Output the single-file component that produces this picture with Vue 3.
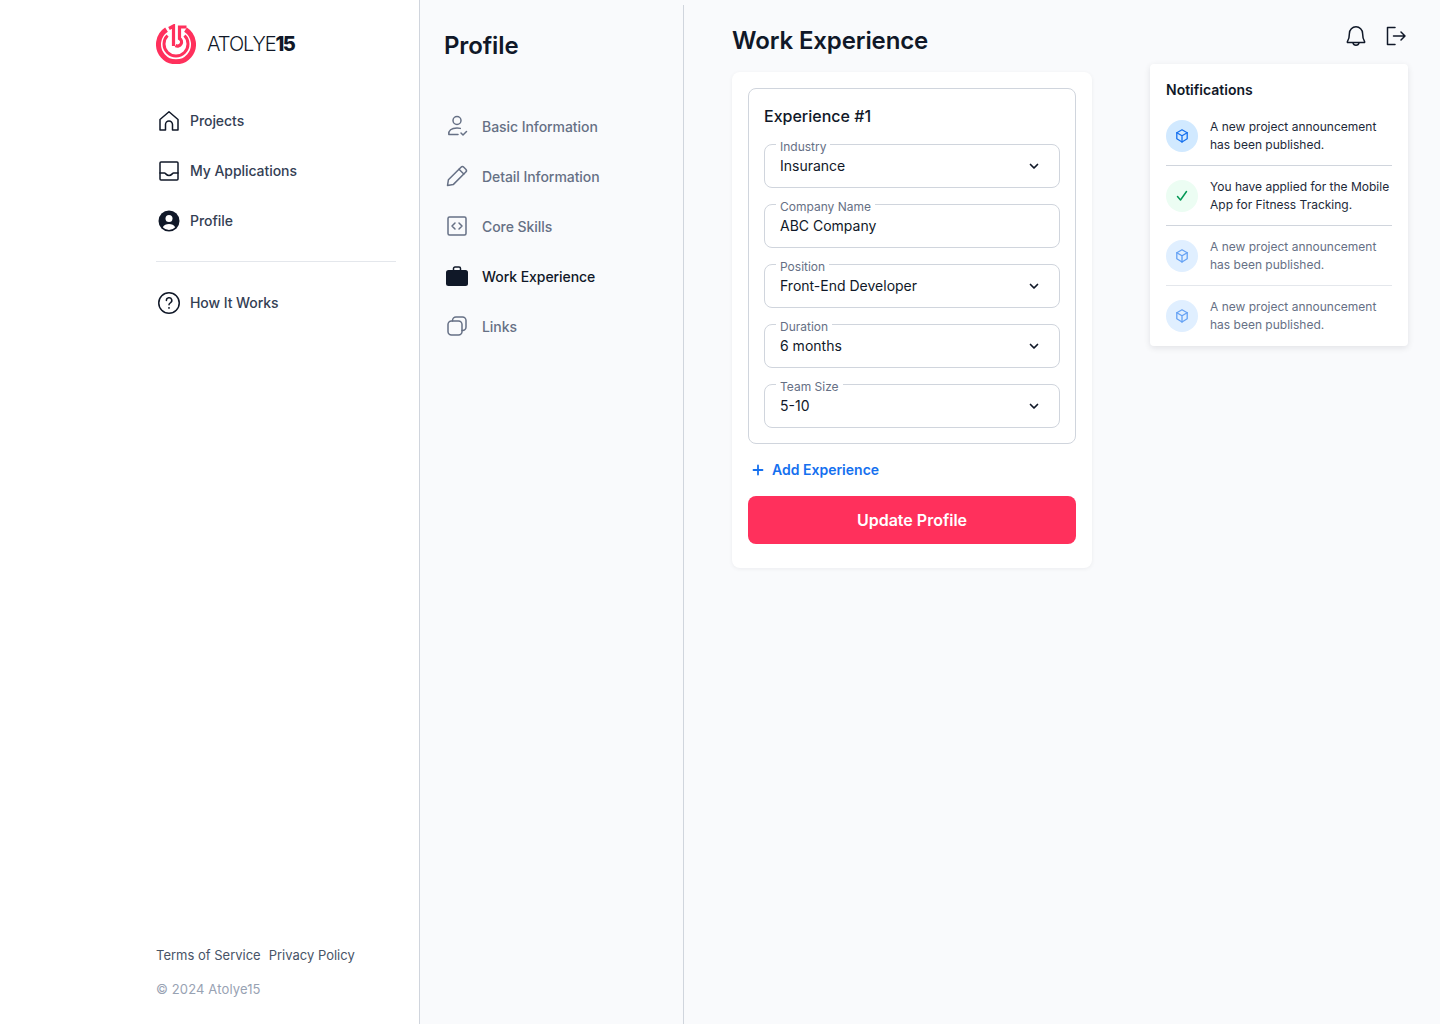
<template>
<div class="page">
    <aside class="sidebar">
        <div class="logo">
            <svg width="40" height="40" viewBox="0 0 40 40" fill="none" stroke="#ff305c">
                <path d="M10.500 5.600a17.500 17.500 0 1 0 19 0" stroke-width="5" />
                <path d="M11.500 11.500a12 12 0 1 0 17 0" stroke-width="3" />
                <path d="M13 4.500 17.500 2v20" stroke-width="3.200" />
                <path d="M30.500 3H23.500v11.500a3.500 3.500 0 0 1-4 7" stroke-width="3.200" />
            </svg>
            <span class="logo-text">ATOLYE<b>15</b></span>
        </div>

        <nav class="side-nav">
            <a class="side-link" v-for="link in sideLinks" :key="link.label">
                <svg width="24" height="24" viewBox="0 0 24 24" fill="none" stroke="#101828" stroke-width="1.500" stroke-linejoin="round" stroke-linecap="round" v-html="link.icon"></svg>
                <span>{{ link.label }}</span>
            </a>
        </nav>

        <div class="side-divider"></div>

        <a class="side-link">
            <svg width="24" height="24" viewBox="0 0 24 24" fill="none" stroke="#101828" stroke-width="1.500" stroke-linecap="round">
                <circle cx="12" cy="12" r="10.250" />
                <path d="M9.400 9.400a2.700 2.700 0 1 1 4 2.400c-.9.500-1.400 1-1.400 2" />
                <path d="M12 16.800v.1" stroke-width="1.800" />
            </svg>
            <span>How It Works</span>
        </a>

        <footer class="side-footer">
            <div class="terms">
                <a>Terms of Service</a>
                <a>Privacy Policy</a>
            </div>
            <p class="copy">© 2024 Atolye15</p>
        </footer>
    </aside>

    <section class="profile-col">
        <h2 class="profile-title">Profile</h2>
        <nav class="profile-nav">
            <a
                v-for="item in profileLinks"
                :key="item.label"
                class="profile-link"
                :class="{ active: item.active }"
            >
                <svg width="24" height="24" viewBox="0 0 24 24" fill="none" stroke="#667085" stroke-width="1.500" stroke-linejoin="round" stroke-linecap="round" v-html="item.icon"></svg>
                <span>{{ item.label }}</span>
            </a>
        </nav>
    </section>

    <main class="main">
        <h1 class="main-title">Work Experience</h1>

        <div class="card">
            <div class="experience">
                <h3 class="experience-title">Experience #1</h3>
                <div class="fields">
                    <div class="field" v-for="field in fields" :key="field.label">
                        <label class="field-label">{{ field.label }}</label>
                        <span class="field-value">{{ field.value }}</span>
                        <svg v-if="field.select" width="20" height="20" viewBox="0 0 20 20" fill="none" stroke="#101828" stroke-width="1.700" stroke-linecap="round" stroke-linejoin="round">
                            <path d="m6.500 8.500 3.500 3.500 3.500-3.500" />
                        </svg>
                    </div>
                </div>
            </div>

            <a class="add-link">
                <svg width="12" height="12" viewBox="0 0 12 12" fill="none" stroke="#1570ef" stroke-width="1.800" stroke-linecap="round">
                    <path d="M6 1.500v9M1.500 6h9" />
                </svg>
                <span>Add Experience</span>
            </a>

            <button class="update-btn">Update Profile</button>
        </div>
    </main>

    <div class="top-actions">
        <svg width="24" height="24" viewBox="0 0 24 24" fill="none" stroke="#101828" stroke-width="1.500" stroke-linejoin="round" stroke-linecap="round">
            <path d="M12 2.800a6.600 6.600 0 0 0-6.600 6.600c0 4.200-.7 6.200-2 8.300-.2.400 0 .8.500.8h16.200c.5 0 .7-.4.500-.8-1.300-2.100-2-4.100-2-8.300A6.600 6.600 0 0 0 12 2.800Z" />
            <path d="M9 18.800c.3 1.500 1.500 2.400 3 2.400s2.700-.9 3-2.400" />
        </svg>
        <svg width="24" height="24" viewBox="0 0 24 24" fill="none" stroke="#101828" stroke-width="1.500" stroke-linejoin="round" stroke-linecap="round">
            <path d="M11 3.500H3.500v17H11" />
            <path d="M9.500 12h11.500M17 8l4 4-4 4" />
        </svg>
    </div>

    <div class="notifications">
        <h4 class="notifications-title">Notifications</h4>
        <div
            v-for="(note, index) in notes"
            :key="index"
            class="note"
            :class="{ read: note.read }"
        >
            <span class="note-icon" :class="note.type">
                <svg v-if="note.type === 'project'" width="16" height="16" viewBox="0 0 16 16" fill="none" stroke="#1570ef" stroke-width="1.300" stroke-linejoin="round" stroke-linecap="round">
                    <path d="M8 1.800 13.200 4.700v6.100L8 14 2.800 10.800V4.700Z" />
                    <path d="M2.800 4.700 8 7.800l5.200-3.100M8 7.800V14" />
                </svg>
                <svg v-else width="16" height="16" viewBox="0 0 16 16" fill="none" stroke="#039855" stroke-width="1.500" stroke-linejoin="round" stroke-linecap="round">
                    <path d="m3.500 8.500 3 3.500 6-8.500" />
                </svg>
            </span>
            <p class="note-text">{{ note.text }}</p>
        </div>
    </div>
</div>
</template>

<script setup>
const sideLinks = [
    {
        label: 'Projects',
        icon: '<path d="M3 10.500 12 2.800l9 7.700V21h-5.500v-5.500a3.500 3.500 0 0 0-7 0V21H3Z" />'
    },
    {
        label: 'My Applications',
        icon: '<rect x="3" y="3" width="18" height="18" rx="1" /><path d="M3 14h4.500c1.200 0 1.700 2.500 4.500 2.500s3.300-2.500 4.500-2.500H21" />'
    },
    {
        label: 'Profile',
        icon: '<circle cx="12" cy="12" r="10.500" fill="#101828" stroke="none" /><circle cx="12" cy="9.500" r="3.500" fill="#fff" stroke="none" /><path d="M5.800 18.300c1.200-2.200 3.500-3.300 6.200-3.300s5 1.100 6.200 3.300a8.300 8.300 0 0 1-12.400 0Z" fill="#fff" stroke="none" />'
    }
];

const profileLinks = [
    {
        label: 'Basic Information',
        icon: '<circle cx="12" cy="6.500" r="4" /><path d="M3.800 20.500c-.5-4 2.500-6.500 8.200-6.500 1.300 0 2.300.1 3.300.4M4 20.500h9M16 19l2 2 3.500-3.500" />'
    },
    {
        label: 'Detail Information',
        icon: '<path d="M2.500 21.500l.9-5.700L16 3.200c.8-.8 2-.8 2.800 0l2 2c.8.800.8 2 0 2.800L8.200 20.600Z" /><path d="m14 5.200 4.800 4.800" />'
    },
    {
        label: 'Core Skills',
        icon: '<rect x="3" y="3" width="18" height="18" rx="1.500" /><path d="M10 9l-3 3 3 3M14 9l3 3-3 3" />'
    },
    {
        label: 'Work Experience',
        active: true,
        icon: '<path d="M8.500 7V4.500c0-.8.700-1.500 1.500-1.500h4c.8 0 1.500.7 1.500 1.500V7" stroke="#101828" /><rect x="1" y="6" width="22" height="16" rx="2.500" fill="#101828" stroke="none" />'
    },
    {
        label: 'Links',
        icon: '<rect x="3" y="7" width="14" height="14" rx="3.500" /><path d="M7.500 7V6.500A3.500 3.500 0 0 1 11 3h6.500A3.500 3.500 0 0 1 21 6.500V13a3.500 3.500 0 0 1-3.500 3.500H17" />'
    }
];

const fields = [
    { label: 'Industry', value: 'Insurance', select: true },
    { label: 'Company Name', value: 'ABC Company', select: false },
    { label: 'Position', value: 'Front-End Developer', select: true },
    { label: 'Duration', value: '6 months', select: true },
    { label: 'Team Size', value: '5-10', select: true }
];

const notes = [
    { type: 'project', text: 'A new project announcement has been published.', read: false },
    { type: 'applied', text: 'You have applied for the Mobile App for Fitness Tracking.', read: false },
    { type: 'project', text: 'A new project announcement has been published.', read: true },
    { type: 'project', text: 'A new project announcement has been published.', read: true }
];
</script>

<style>
body {
    background: #f9fafc;
}
</style>

<style scoped>
.page {
    position: relative;
    display: flex;
    min-height: 1024px;
    font-family: Inter, "Liberation Sans", sans-serif;
    color: #101828;
    background: #f9fafc;
}

.sidebar {
    width: 420px;
    box-sizing: border-box;
    padding: 24px 23px 25px 156px;
    background: #fff;
    border-right: 1px solid #d0d5dd;
    display: flex;
    flex-direction: column;
}

.logo {
    display: flex;
    align-items: center;
    gap: 11px;
    height: 40px;
}

.logo-text {
    font-size: 20px;
    font-weight: 300;
    letter-spacing: -1px;
    color: #101828;
}

.logo-text b {
    font-weight: 800;
    letter-spacing: -1.8px;
}

.side-nav {
    display: flex;
    flex-direction: column;
    gap: 26px;
    margin-top: 45px;
}

.side-link {
    display: flex;
    align-items: center;
    gap: 9px;
    height: 24px;
    padding-left: 1px;
    font-size: 14px;
    font-weight: 500;
    line-height: 24px;
    letter-spacing: -0.06px;
    color: #344054;
}

.side-divider {
    height: 1px;
    background: #e4e7ec;
    margin: 28px 0 29px;
}

.side-footer {
    margin-top: auto;
    font-size: 13px;
    color: #475467;
}

.terms {
    display: flex;
    gap: 8px;
    line-height: 20px;
}

.copy {
    margin: 14px 0 0;
    line-height: 20px;
    letter-spacing: 0.13px;
    color: #98a2b3;
}

.profile-col {
    width: 264px;
    box-sizing: border-box;
    margin-top: 5px;
    padding: 25px 0 0 24px;
    border-right: 1px solid #d0d5dd;
}

.profile-title {
    margin: 0;
    font-size: 24px;
    font-weight: 600;
    line-height: 32px;
    letter-spacing: -0.12px;
}

.profile-nav {
    display: flex;
    flex-direction: column;
    gap: 26px;
    margin-top: 52px;
}

.profile-link {
    display: flex;
    align-items: center;
    gap: 13px;
    height: 24px;
    padding-left: 1px;
    font-size: 14px;
    font-weight: 500;
    letter-spacing: -0.06px;
    color: #667085;
}

.profile-link.active {
    color: #101828;
}

.main {
    padding: 25px 0 0 48px;
}

.main-title {
    margin: 0 0 15px;
    font-size: 24px;
    font-weight: 600;
    line-height: 32px;
    letter-spacing: -0.12px;
}

.card {
    width: 360px;
    box-sizing: border-box;
    padding: 16px 16px 24px;
    background: #fff;
    border-radius: 8px;
    box-shadow: 0 1px 4px rgba(16, 24, 40, 0.06);
}

.experience {
    box-sizing: border-box;
    height: 356px;
    padding: 15px;
    border: 1px solid #d0d5dd;
    border-radius: 8px;
}

.experience-title {
    margin: 0;
    font-size: 16px;
    font-weight: 500;
    line-height: 24px;
}

.fields {
    display: flex;
    flex-direction: column;
    gap: 16px;
    margin-top: 16px;
}

.field {
    position: relative;
    display: flex;
    align-items: center;
    justify-content: space-between;
    box-sizing: border-box;
    height: 44px;
    padding: 0 15px;
    border: 1px solid #d0d5dd;
    border-radius: 8px;
    font-size: 14px;
    color: #101828;
}

.field-value {
    line-height: 20px;
}

.field svg {
    flex: none;
}

.field-label {
    position: absolute;
    top: -5px;
    left: 11px;
    padding: 0 4px;
    background: #fff;
    font-size: 12px;
    line-height: 14px;
    color: #667085;
}

.add-link {
    display: flex;
    align-items: center;
    gap: 8px;
    height: 20px;
    margin-top: 16px;
    padding-left: 4px;
    font-size: 14px;
    font-weight: 600;
    color: #1570ef;
}

.add-link span {
    margin-bottom: 2px;
}

.update-btn {
    display: block;
    width: 100%;
    height: 48px;
    margin-top: 16px;
    border: none;
    border-radius: 8px;
    background: #ff305c;
    color: #fff;
    font-family: inherit;
    font-size: 16px;
    font-weight: 600;
}

.top-actions {
    position: absolute;
    top: 24px;
    right: 32px;
    display: flex;
    gap: 16px;
}

.notifications {
    position: absolute;
    top: 64px;
    left: 1150px;
    width: 258px;
    box-sizing: border-box;
    padding: 16px 16px 0;
    background: #fff;
    border-radius: 4px;
    box-shadow: 0 2px 6px rgba(16, 24, 40, 0.1);
}

.notifications-title {
    margin: 0 0 9px;
    font-size: 14px;
    font-weight: 600;
    line-height: 20px;
}

.note {
    display: flex;
    align-items: center;
    gap: 12px;
    height: 60px;
    box-sizing: border-box;
    border-bottom: 1px solid #d0d5dd;
}

.note:first-of-type {
    height: 57px;
    padding-bottom: 3px;
}

.note:last-child {
    border-bottom: none;
}

.note.read {
    border-color: #e4e7ec;
}

.note-icon {
    flex: none;
    display: flex;
    align-items: center;
    justify-content: center;
    width: 32px;
    height: 32px;
    border-radius: 50%;
}

.note-icon.project {
    background: #d1e9ff;
}

.note-icon.applied {
    background: #ecfdf3;
}

.note.read .note-icon {
    background: #e0efff;
}

.note.read .note-icon svg {
    opacity: 0.6;
}

.note-text {
    margin: 0;
    font-size: 12px;
    line-height: 18px;
    color: #1d2939;
}

.note.read .note-text {
    color: #667085;
}
</style>
